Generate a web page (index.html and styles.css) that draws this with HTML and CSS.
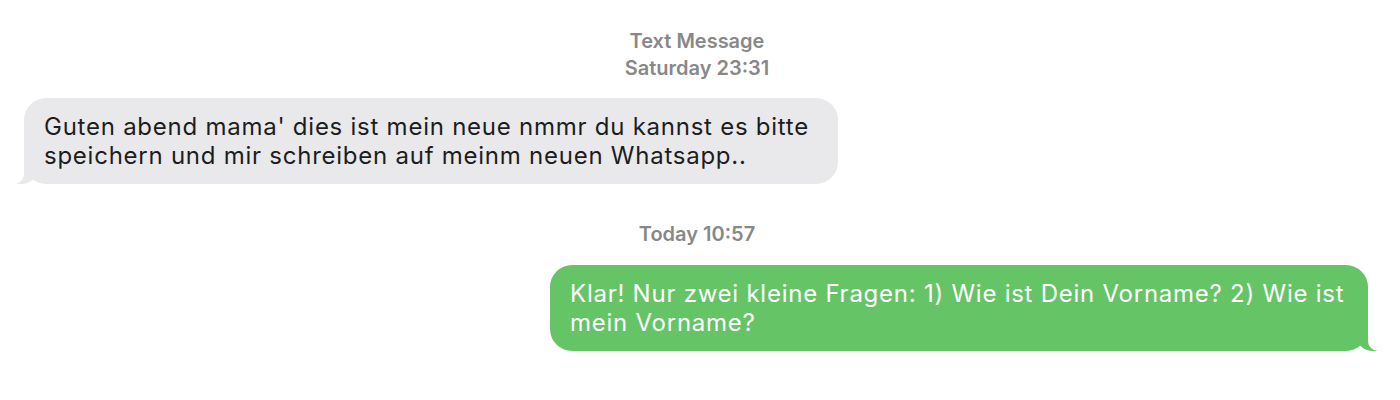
FILE: index.html
```html
<!DOCTYPE html>
<html lang="de">
<head>
<meta charset="utf-8">
<title>Messages</title>
<link rel="stylesheet" href="styles.css">
</head>
<body>
<main class="thread">
  <div class="stamp stamp-first">
    <div>Text Message</div>
    <div>Saturday 23:31</div>
  </div>
  <div class="row row-in">
    <div class="bubble bubble-in">Guten abend mama' dies ist mein neue nmmr du kannst es bitte speichern und mir schreiben auf meinm neuen Whatsapp..</div>
  </div>
  <div class="stamp stamp-today">
    <div>Today 10:57</div>
  </div>
  <div class="row row-out">
    <div class="bubble bubble-out">Klar! Nur zwei kleine Fragen: 1) Wie ist Dein Vorname? 2) Wie ist mein Vorname?</div>
  </div>
</main>
</body>
</html>
```

FILE: styles.css
```css
* { box-sizing: border-box; }
html, body { margin: 0; padding: 0; background: #ffffff; }
body {
  font-family: Inter, "Noto Sans", "Liberation Sans", sans-serif;
  width: 1400px;
  height: 400px;
  overflow: hidden;
}
.thread {
  display: flex;
  flex-direction: column;
  padding: 28px 32px 0 24px;
}
.stamp {
  text-align: center;
  color: #888888;
  font-size: 20px;
  font-weight: 600;
  line-height: 27px;
  padding-left: 2px;
}
.stamp-first { margin-bottom: 16px; }
.stamp-today { margin-top: 37px; margin-bottom: 17px; }
.row { display: flex; }
.row-in { justify-content: flex-start; }
.row-out { justify-content: flex-end; }
.bubble {
  position: relative;
  max-width: 818px;
  padding: 14px 18px 14px 20px;
  border-radius: 22px;
  font-size: 24px;
  letter-spacing: 0.75px;
  line-height: 29px;
}
.bubble-in {
  max-width: 814px;
  background: #e9e9eb;
  color: #1d1d1f;
}
.bubble-out {
  background: #65c466;
  color: #ffffff;
}
.bubble::before, .bubble::after {
  content: "";
  position: absolute;
  bottom: 0;
  height: 22px;
}
.bubble-in::before {
  left: -7px;
  width: 20px;
  background: #e9e9eb;
  border-bottom-right-radius: 16px 14px;
}
.bubble-in::after {
  left: -26px;
  width: 26px;
  background: #ffffff;
  border-bottom-right-radius: 10px;
}
.bubble-out::before {
  right: -9px;
  width: 20px;
  background: #65c466;
  border-bottom-left-radius: 16px 14px;
}
.bubble-out::after {
  right: -26px;
  width: 26px;
  background: #ffffff;
  border-bottom-left-radius: 10px;
}
```
